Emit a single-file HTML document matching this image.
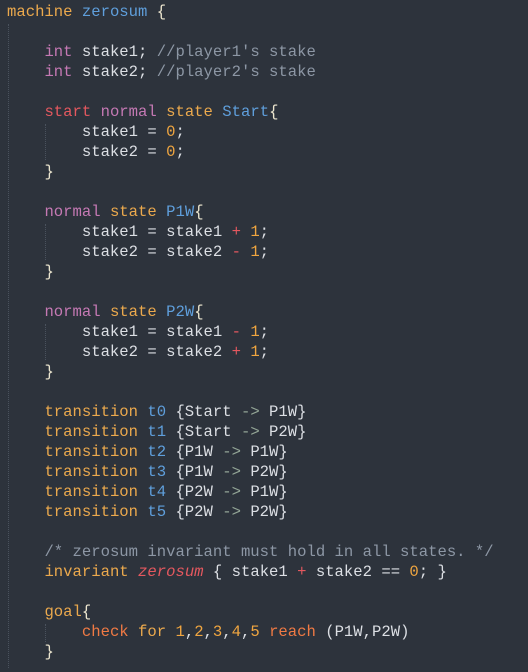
<!DOCTYPE html>
<html><head><meta charset="utf-8"><style>
html,body{margin:0;padding:0;background:#2d333c;width:528px;height:672px;overflow:hidden}
pre{margin:0;position:absolute;left:7px;top:2px;font-family:"Liberation Mono",monospace;font-size:15.6px;line-height:20px;color:#dcdfe4}
.o{color:#eba94d}.b{color:#5f9fdc}.p{color:#c579b4}.c{color:#8d97a5}.r{color:#e4585f}
.n{color:#f0a640}.g{color:#93a596}.x{color:#f07a44}.i{color:#e4585f;font-style:italic}
.w{color:#ece6cf}
.guide{position:absolute;width:0;border-left:1px dotted #4a525d}
</style></head><body>
<div class="guide" style="left:8px;top:24px;height:644px"></div>
<div class="guide" style="left:45px;top:124px;height:36px"></div>
<div class="guide" style="left:45px;top:224px;height:36px"></div>
<div class="guide" style="left:45px;top:324px;height:36px"></div>
<div class="guide" style="left:45px;top:624px;height:18px"></div>
<pre><span class="o">machine</span> <span class="b">zerosum</span> <span class="w">{</span>

    <span class="p">int</span> stake1; <span class="c">//player1's stake</span>
    <span class="p">int</span> stake2; <span class="c">//player2's stake</span>

    <span class="r">start</span> <span class="p">normal</span> <span class="o">state</span> <span class="b">Start</span><span class="w">{</span>
        stake1 = <span class="n">0</span>;
        stake2 = <span class="n">0</span>;
    <span class="w">}</span>

    <span class="p">normal</span> <span class="o">state</span> <span class="b">P1W</span><span class="w">{</span>
        stake1 = stake1 <span class="r">+</span> <span class="n">1</span>;
        stake2 = stake2 <span class="r">-</span> <span class="n">1</span>;
    <span class="w">}</span>

    <span class="p">normal</span> <span class="o">state</span> <span class="b">P2W</span><span class="w">{</span>
        stake1 = stake1 <span class="r">-</span> <span class="n">1</span>;
        stake2 = stake2 <span class="r">+</span> <span class="n">1</span>;
    <span class="w">}</span>

    <span class="o">transition</span> <span class="b">t0</span> {Start <span class="g">-&gt;</span> P1W}
    <span class="o">transition</span> <span class="b">t1</span> {Start <span class="g">-&gt;</span> P2W}
    <span class="o">transition</span> <span class="b">t2</span> {P1W <span class="g">-&gt;</span> P1W}
    <span class="o">transition</span> <span class="b">t3</span> {P1W <span class="g">-&gt;</span> P2W}
    <span class="o">transition</span> <span class="b">t4</span> {P2W <span class="g">-&gt;</span> P1W}
    <span class="o">transition</span> <span class="b">t5</span> {P2W <span class="g">-&gt;</span> P2W}

    <span class="c">/* zerosum invariant must hold in all states. */</span>
    <span class="o">invariant</span> <span class="i">zerosum</span> { stake1 <span class="r">+</span> stake2 == <span class="n">0</span>; }

    <span class="o">goal</span><span class="w">{</span>
        <span class="x">check</span> <span class="o">for</span> <span class="n">1</span>,<span class="n">2</span>,<span class="n">3</span>,<span class="n">4</span>,<span class="n">5</span> <span class="x">reach</span> (P1W,P2W)
    <span class="w">}</span></pre>
</body></html>
